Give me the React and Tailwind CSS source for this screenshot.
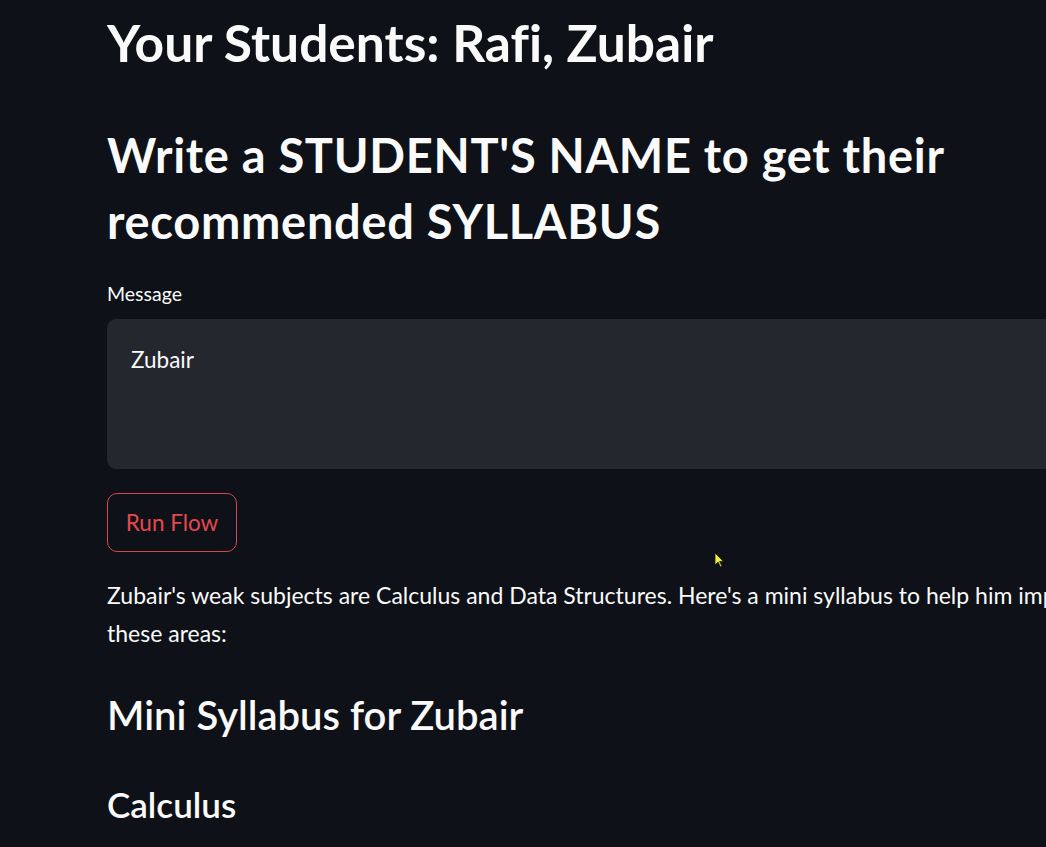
import { useState } from 'react'

const font = { fontFamily: 'Lato, "Noto Sans", sans-serif' }

export default function App() {
  const [message, setMessage] = useState('Zubair')

  return (
    <div className="relative h-[847px] w-full overflow-hidden bg-[#0e1117] text-[#fafafa] [font-variant-ligatures:none]" style={font}>
      {/* main column, wider than the window like the zoomed-in page */}
      <div className="ml-[107px] w-[1100px] pt-[12px]">
        <h1 className="text-[51.5px] font-bold leading-[60px]">Your Students: Rafi, Zubair</h1>

        <h2 className="mt-[50px] text-[47px] font-bold leading-[66px] tracking-[0.7px]">
          Write a STUDENT'S NAME to get their
          <br />
          recommended SYLLABUS
        </h2>

        <label className="mt-[28px] block text-[19.5px] leading-[24px]">Message</label>
        <textarea
          value={message}
          onChange={(e) => setMessage(e.target.value)}
          className="mt-[13px] block h-[150px] w-full resize-none rounded-[9px] bg-[#25272f] pl-[24px] pt-[27px] text-[22.5px] leading-[28px] text-[#fafafa] outline-none"
          style={font}
        />

        <button
          className="mt-[24px] flex h-[59px] w-[130px] items-center justify-center rounded-[10px] border border-[#d9464b] bg-transparent text-[22.5px] text-[#e6484d]"
          style={font}
        >
          Run Flow
        </button>

        <p className="mt-[25px] whitespace-nowrap text-[23px] leading-[37.5px]">
          Zubair's weak subjects are Calculus and Data Structures. Here's a mini syllabus to help him improve in
          <br />
          these areas:
        </p>

        <h3 className="mt-[38px] text-[40px] font-semibold leading-[50px]">Mini Syllabus for Zubair</h3>

        <h4 className="mt-[42px] text-[35px] font-semibold leading-[44px]">Calculus</h4>
      </div>

      {/* mouse pointer caught in the screenshot */}
      <svg className="absolute left-[714px] top-[552px]" width="10" height="16" viewBox="0 0 10 16">
        <path d="M1 1 L1 13 L4 10 L6.5 15 L8 14.3 L5.6 9.4 L9.5 9.4 Z" fill="#f2ef3a" stroke="#1a1a10" strokeWidth="0.8" />
      </svg>
    </div>
  )
}
